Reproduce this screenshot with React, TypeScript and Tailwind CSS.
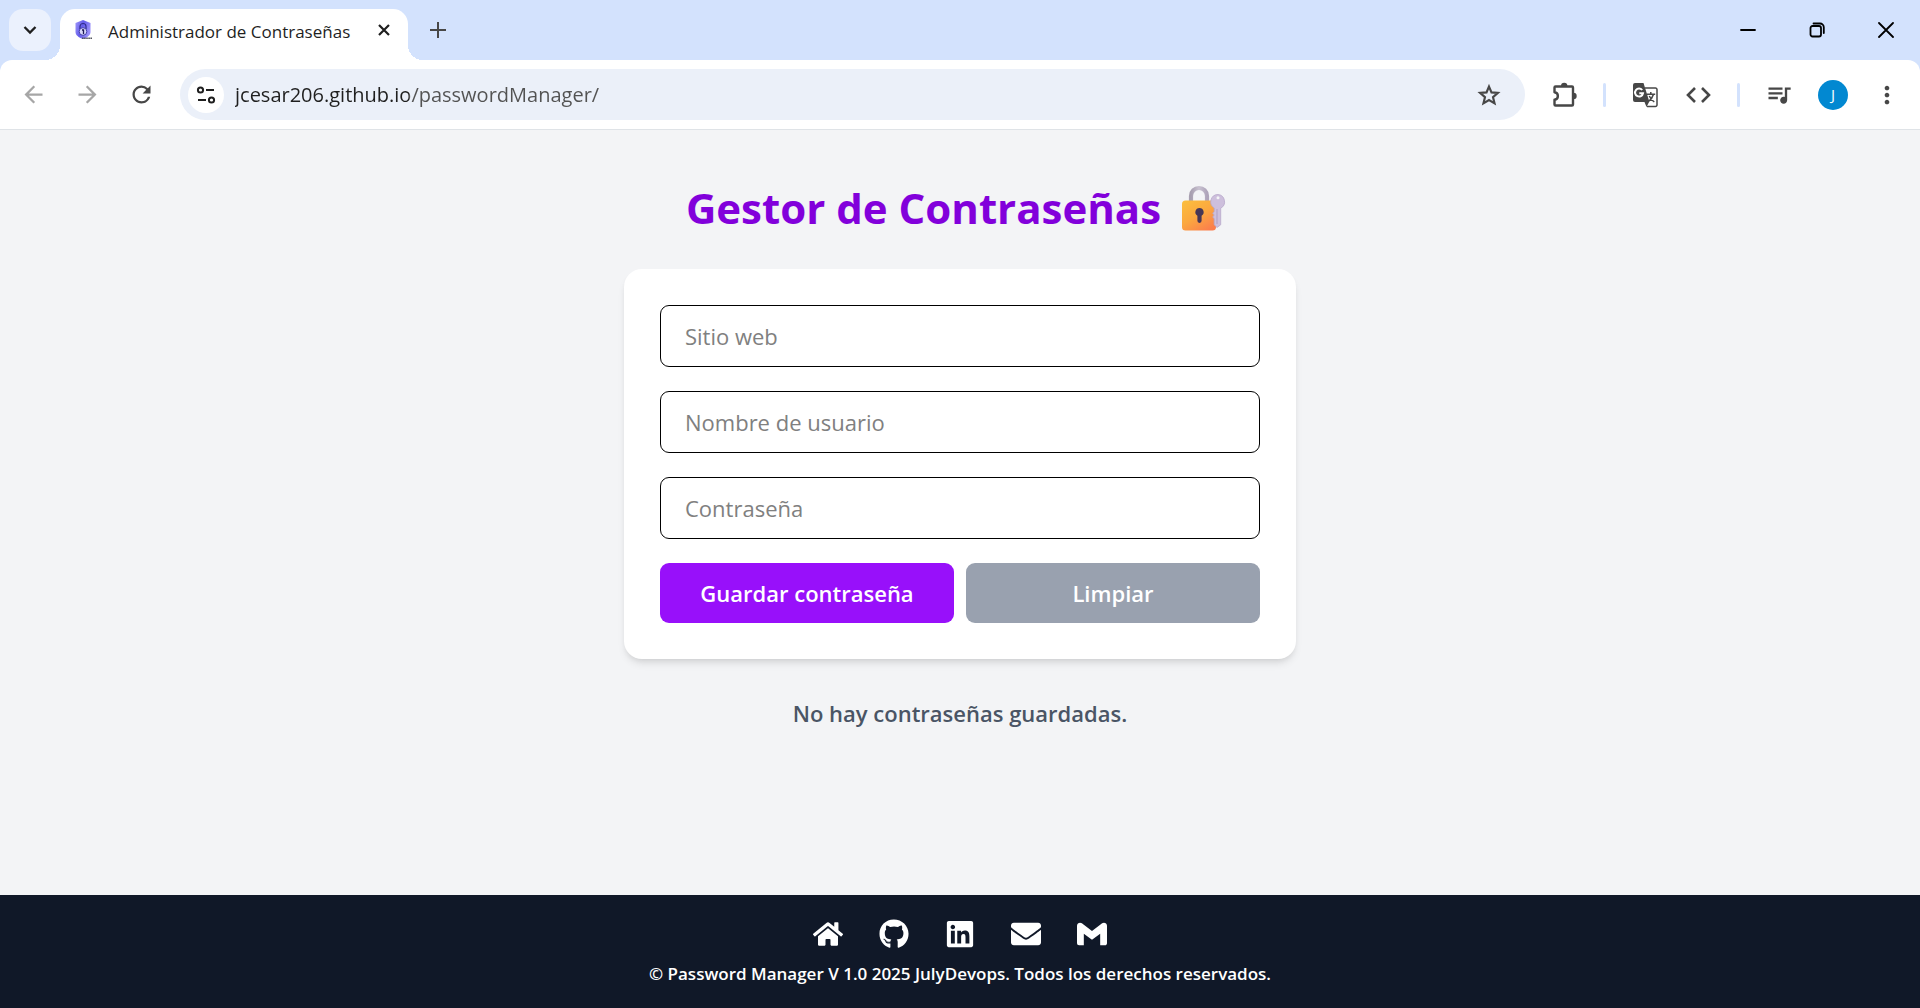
import type { ReactNode } from "react";
import { FaEnvelope, FaGithub, FaHome, FaLinkedin } from "react-icons/fa";
import {
  MdArrowBack,
  MdArrowForward,
  MdMoreVert,
  MdQueueMusic,
  MdRefresh,
} from "react-icons/md";
import { SiGmail } from "react-icons/si";

function ShieldIcon() {
  return (
    <svg viewBox="0 0 18 20" className="h-5 w-[18px] shrink-0" aria-hidden="true">
      <defs>
        <linearGradient id="shield" x1="0" x2="1" y1="0" y2="0.4">
          <stop offset="0" stopColor="#a19afa" />
          <stop offset="0.5" stopColor="#635bea" />
          <stop offset="1" stopColor="#9a90fa" />
        </linearGradient>
      </defs>
      <path d="M8 0 15.500 3v9c0 3-3 5.500-7.500 7C3.500 17.500.5 15 .5 12V3Z" fill="url(#shield)" />
      <path d="M5 9V6.500a3 3 0 0 1 6 0V9" fill="none" stroke="#312c8c" strokeWidth="1.200" />
      <circle cx="8" cy="11.500" r="3.800" fill="#d9d8fb" stroke="#4540a8" strokeWidth="1" />
      <path d="M7 10h1.500v4" fill="none" stroke="#1d1a55" strokeWidth="1.300" />
      <path d="M7 18.200h10.500" stroke="#55565f" strokeWidth="1.600" strokeDasharray="1.600 .5" />
    </svg>
  );
}

function ExtensionIcon() {
  return (
    <svg viewBox="0 0 28 28" className="size-7" aria-hidden="true">
      <path
        d="M5.500 5.500H22a1 1 0 0 1 1 1v17a1 1 0 0 1-1 1H5.500a1 1 0 0 1-1-1v-4.700c4.500-.5 4.500-7.100 0-7.600V6.500a1 1 0 0 1 1-1Z"
        fill="none"
        stroke="#474747"
        strokeWidth="2.400"
        strokeLinejoin="round"
      />
      <path d="M11 5a3.200 3.200 0 0 1 6.400 0ZM23.500 11.800a3.200 3.200 0 0 1 0 6.400Z" fill="#474747" />
    </svg>
  );
}

function TranslateIcon() {
  return (
    <svg viewBox="0 0 26 26" className="size-[26px]" aria-hidden="true">
      <path d="M13 6h10.500a1.500 1.500 0 0 1 1.500 1.500V23a1.500 1.500 0 0 1-1.500 1.500H15" fill="none" stroke="#474747" strokeWidth="1.500" />
      <path d="M3 1h8.500L17.300 19.500 14.500 25 12.500 20H3a2 2 0 0 1-2-2V3a2 2 0 0 1 2-2Z" fill="#474747" />
      <path d="M10.200 8a4 4 0 1 0 .8 3.200H7.300" fill="none" stroke="#fff" strokeWidth="2" />
      <path d="M14.800 12.200h8.400M18.800 10v2M21.400 12.500c-.8 3-2.600 5.300-5 7M17.300 14c1 2.400 2.800 4.500 5 6" fill="none" stroke="#474747" strokeWidth="1.500" />
    </svg>
  );
}

function StarIcon() {
  return (
    <svg viewBox="0 0 24 24" className="size-[26px]" fill="none" stroke="#474747" strokeWidth="2" aria-hidden="true">
      <path d="m12 4.200 2.300 5.400 5.900.5-4.500 3.900 1.400 5.700L12 16.700l-5.100 3 1.400-5.700-4.500-3.900 5.900-.5Z" />
    </svg>
  );
}

function CodeIcon() {
  return (
    <svg viewBox="0 0 28 28" className="size-7" fill="none" stroke="#474747" strokeWidth="2.600" aria-hidden="true">
      <path d="m11 7-7 7 7 7M18 7l7 7-7 7" />
    </svg>
  );
}

function SiteInfoIcon() {
  return (
    <svg viewBox="0 0 20 20" className="size-5" fill="none" stroke="#1f1f1f" strokeWidth="2" aria-hidden="true">
      <circle cx="4.500" cy="5" r="2.600" />
      <path d="M10 5h8M2 15h8" />
      <circle cx="15.500" cy="15" r="2.600" />
    </svg>
  );
}

function LockKeyIcon() {
  return (
    <svg viewBox="0 0 44 46" className="ml-[21px] mr-2 h-[46px] w-11 shrink-0" role="img" aria-label="Candado con llave">
      <defs>
        <linearGradient id="lockBody" x1="0.1" y1="0" x2="0.8" y2="1">
          <stop offset="0" stopColor="#fbbd3d" />
          <stop offset="0.5" stopColor="#fba83f" />
          <stop offset="1" stopColor="#fb7d4d" />
        </linearGradient>
        <linearGradient id="shackle" x1="0" y1="0" x2="1" y2="0">
          <stop offset="0" stopColor="#a79fb0" />
          <stop offset="0.5" stopColor="#c9c2d1" />
          <stop offset="1" stopColor="#aea4ba" />
        </linearGradient>
      </defs>
      <path d="M9 17v-6a8 8 0 0 1 16 0v6" fill="none" stroke="url(#shackle)" strokeWidth="4.200" />
      <rect x="0" y="15.500" width="34" height="30" rx="3.500" fill="url(#lockBody)" />
      <path
        d="M36 9.500a7.300 7.300 0 0 0-3.800 13.500v3.500l-1.500 1.700 1.500 1.800-1.500 2 1.500 1.800v6l2.800 2.700 3.700-2.700V23.200A7.300 7.300 0 0 0 36 9.500Z"
        fill="#cdbfdc"
        stroke="#b7a8ca"
        strokeWidth="0.800"
      />
      <circle cx="36" cy="12.800" r="1.500" fill="#f3f4f6" />
      <path d="M35 24v15" stroke="#b5a5c8" strokeWidth="1.200" />
      <path d="M17.500 23a4.200 4.200 0 0 0-2.100 7.800v5a2.100 2.100 0 0 0 4.200 0v-5A4.200 4.200 0 0 0 17.500 23Z" fill="#453656" />
    </svg>
  );
}

function WindowButton({ label, children }: { label: string; children: ReactNode }) {
  return (
    <button type="button" aria-label={label} className="flex h-[60px] w-[69px] items-center justify-center">
      <svg viewBox="0 0 16 16" className="size-4" fill="none" stroke="#000" strokeWidth="1.800" strokeLinecap="round" aria-hidden="true">
        {children}
      </svg>
    </button>
  );
}

function TabStrip() {
  return (
    <div className="flex h-[60px] items-stretch pl-[9px]">
      <button type="button" aria-label="Buscar pestañas" className="mt-[9px] flex size-[42px] items-center justify-center rounded-[14px] bg-[#ebf1fd]">
        <svg viewBox="0 0 14 14" className="size-3.5" fill="none" stroke="#1f1f1f" strokeWidth="2.300" aria-hidden="true">
          <path d="m1.500 4 5.500 5.500L12.500 4" />
        </svg>
      </button>
      <div className="relative ml-[9px] mt-[9px] flex w-[348px] items-center rounded-t-[15px] bg-white pb-[9px] pl-[15px] pr-4">
        <span className="absolute -left-[15px] bottom-0 size-[15px] bg-[radial-gradient(circle_at_0_0,transparent_15px,#fff_15px)]" />
        <span className="absolute -right-[15px] bottom-0 size-[15px] bg-[radial-gradient(circle_at_100%_0,transparent_15px,#fff_15px)]" />
        <ShieldIcon />
        <span className="ml-[15px] flex-1 whitespace-nowrap pt-[3px] text-[17px] leading-6 text-[#1f1f1f]">Administrador de Contraseñas</span>
        <button type="button" aria-label="Cerrar pestaña" className="flex size-4 items-center justify-center">
          <svg viewBox="0 0 12 12" className="size-3" fill="none" stroke="#1f1f1f" strokeWidth="2.200" aria-hidden="true">
            <path d="m1 1 10 10M11 1 1 11" />
          </svg>
        </button>
      </div>
      <button type="button" aria-label="Nueva pestaña" className="ml-[15px] flex w-[30px] items-center justify-center">
        <svg viewBox="0 0 16 16" className="size-4" fill="none" stroke="#474747" strokeWidth="2" aria-hidden="true">
          <path d="M8 0v16M0 8h16" />
        </svg>
      </button>
      <div className="ml-auto flex">
        <WindowButton label="Minimizar">
          <path d="M1 8h14" />
        </WindowButton>
        <WindowButton label="Restaurar">
          <rect x="1.500" y="4" width="10.500" height="10.500" rx="2" />
          <path d="M4.500 1.500h6.500a3.800 3.800 0 0 1 3.800 3.800V11" />
        </WindowButton>
        <WindowButton label="Cerrar">
          <path d="m1 1 14 14M15 1 1 15" />
        </WindowButton>
      </div>
    </div>
  );
}

function ToolbarButton({ label, children }: { label: string; children: ReactNode }) {
  return (
    <button type="button" aria-label={label} className="flex w-7 shrink-0 items-center justify-center">
      {children}
    </button>
  );
}

function Toolbar() {
  return (
    <div className="flex h-[70px] items-center rounded-t-[12px] border-b border-[#dfe3e7] bg-white pl-[19px] pr-[19px] text-[#474747]">
      <div className="flex items-center gap-[26px] pr-[25px]">
        <button type="button" aria-label="Atrás" className="flex w-7 justify-center text-[#a6a6a6]">
          <MdArrowBack size={27} />
        </button>
        <button type="button" aria-label="Adelante" className="flex w-7 justify-center text-[#a6a6a6]">
          <MdArrowForward size={27} />
        </button>
        <ToolbarButton label="Recargar">
          <MdRefresh size={27} />
        </ToolbarButton>
      </div>
      <div className="flex h-[51px] flex-1 items-center rounded-full bg-[#ebf0f9] pl-2 pr-[22px]">
        <button type="button" aria-label="Información del sitio" className="flex size-9 items-center justify-center rounded-full bg-white">
          <SiteInfoIcon />
        </button>
        <input
          type="text"
          aria-label="Dirección"
          defaultValue="jcesar206.github.io/passwordManager/"
          className="ml-[11px] h-9 flex-1 bg-[linear-gradient(90deg,#1f1f1f_174px,#525252_174px)] bg-clip-text text-[20px] leading-7 text-transparent outline-none"
        />
        <ToolbarButton label="Añadir a marcadores">
          <StarIcon />
        </ToolbarButton>
      </div>
      <div className="flex items-center gap-[25px] pl-[25px]">
        <ToolbarButton label="Extensiones">
          <ExtensionIcon />
        </ToolbarButton>
        <span className="h-6 w-[3px] rounded-full bg-[#d3e2fd]" />
        <ToolbarButton label="Traducir">
          <TranslateIcon />
        </ToolbarButton>
        <ToolbarButton label="Código">
          <CodeIcon />
        </ToolbarButton>
        <span className="h-6 w-[3px] rounded-full bg-[#d3e2fd]" />
        <ToolbarButton label="Control multimedia">
          <MdQueueMusic size={29} />
        </ToolbarButton>
        <button type="button" aria-label="Perfil" className="flex size-[30px] items-center justify-center rounded-full bg-[#0288d1] text-[15px] leading-none text-white">
          J
        </button>
        <button type="button" aria-label="Menú" className="flex w-7 justify-center">
          <MdMoreVert size={28} />
        </button>
      </div>
    </div>
  );
}

const fields = [
  { id: "site", label: "Sitio web", type: "text" },
  { id: "user", label: "Nombre de usuario", type: "text" },
  { id: "password", label: "Contraseña", type: "password" },
];

const links = [
  { label: "Inicio", icon: <FaHome size={30} /> },
  { label: "GitHub", icon: <FaGithub size={30} /> },
  { label: "LinkedIn", icon: <FaLinkedin size={30} /> },
  { label: "Correo", icon: <FaEnvelope size={30} /> },
  { label: "Gmail", icon: <SiGmail size={30} /> },
];

export default function App() {
  return (
    <div className="flex min-h-screen flex-col bg-gray-100 font-['Open_Sans','Noto_Sans',sans-serif]">
      <header className="bg-[#d3e2fd]">
        <TabStrip />
        <Toolbar />
      </header>

      <main className="flex flex-1 flex-col items-center px-6 pt-12">
        <h1 className="mb-8 flex items-center text-[42px] font-bold leading-[59px] text-purple-700">
          Gestor de Contraseñas
          <LockKeyIcon />
        </h1>
        <form className="flex w-full max-w-2xl flex-col gap-6 rounded-[18px] bg-white p-9 shadow-[0_6px_9px_-2px_rgba(0,0,0,0.1),0_3px_6px_-3px_rgba(0,0,0,0.1)]">
          {fields.map((f) => (
            <input
              key={f.id}
              id={f.id}
              type={f.type}
              aria-label={f.label}
              placeholder={f.label}
              className="h-[62px] w-full rounded-[9px] border border-black px-6 text-[22px] placeholder:text-[#808080]"
            />
          ))}
          <div className="grid grid-cols-2 gap-3 text-[22px] font-semibold text-white">
            <button type="button" className="h-[60px] rounded-[9px] bg-purple-600">
              Guardar contraseña
            </button>
            <button type="button" className="h-[60px] rounded-[9px] bg-gray-400">
              Limpiar
            </button>
          </div>
        </form>
        <p className="mt-9 text-[22px] font-semibold leading-9 text-gray-600">No hay contraseñas guardadas.</p>
      </main>

      <footer className="flex flex-col items-center gap-3 bg-gray-900 px-6 pb-[22px] pt-6 text-white">
        <nav className="flex gap-9">
          {links.map((l) => (
            <a key={l.label} href="#" aria-label={l.label}>
              {l.icon}
            </a>
          ))}
        </nav>
        <p className="text-[17px] font-semibold leading-[25px]">
          © Password Manager V 1.0 2025 JulyDevops. Todos los derechos reservados.
        </p>
      </footer>
    </div>
  );
}
